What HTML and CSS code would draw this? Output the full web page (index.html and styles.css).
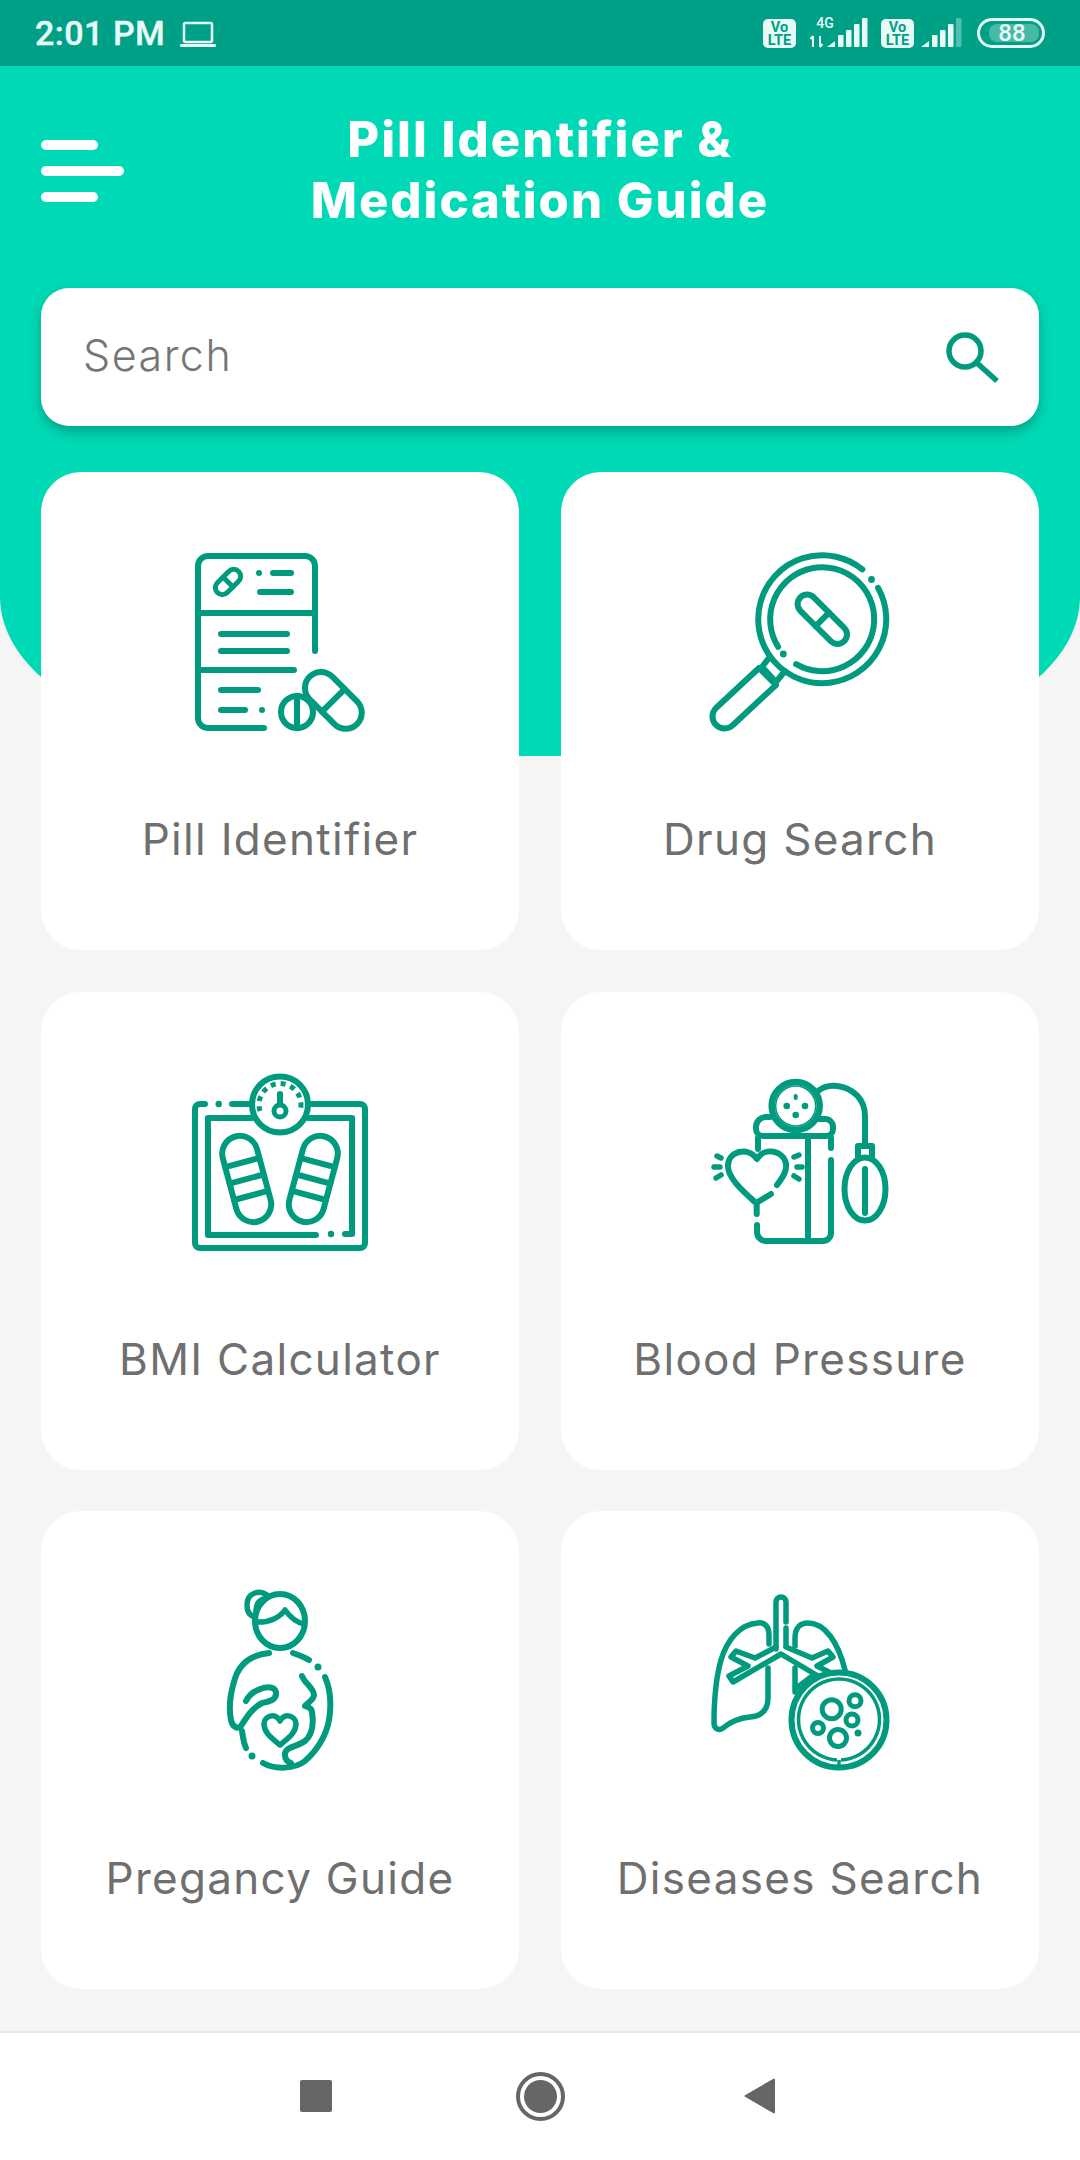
FILE: index.html
```html
<!DOCTYPE html>
<html lang="en">
<head>
<meta charset="utf-8">
<title>Pill Identifier &amp; Medication Guide</title>
<link rel="stylesheet" href="styles.css">
</head>
<body>
<div class="phone">
  <div class="status">
    <div class="status-left">
      <span class="time">2:01 PM</span>
      <svg class="laptop" width="36" height="26" viewBox="0 0 36 26"><rect x="4" y="2" width="28" height="19" rx="1.5" class="laptop-screen"/><rect x="0" y="23" width="36" height="3" rx="1" class="sb-fill"/></svg>
    </div>
    <svg class="status-right" width="282" height="36" viewBox="763 15 282 36">
      <rect x="763" y="19" width="33" height="29" rx="5" class="sb-fill"/>
      <text x="779.5" y="32" class="badge-text">Vo</text><text x="779.5" y="45" class="badge-text">LTE</text>
      <text x="825" y="28" class="net-text">4G</text>
      <path d="M813 36v11M813 36l-2.500 3M820 47v-11M820 47l2.500-3" class="arrows"/>
      <path d="M827 47l8-6v6z" class="sb-fill"/>
      <rect x="838" y="35" width="5.500" height="12" rx="1" class="sb-fill"/><rect x="846" y="30" width="5.500" height="17" rx="1" class="sb-fill"/><rect x="854" y="24" width="5.500" height="23" rx="1" class="sb-fill"/><rect x="862" y="18" width="5.500" height="29" rx="1" class="sb-fill"/>
      <rect x="881" y="19" width="33" height="29" rx="5" class="sb-fill"/>
      <text x="897.500" y="32" class="badge-text">Vo</text><text x="897.500" y="45" class="badge-text">LTE</text>
      <path d="M921 47l8-6v6z" class="sb-fill"/>
      <rect x="932" y="35" width="5.500" height="12" rx="1" class="sb-fill"/><rect x="940" y="30" width="5.500" height="17" rx="1" class="sb-fill"/><rect x="948" y="24" width="5.500" height="23" rx="1" class="sb-fill"/><rect x="956" y="18" width="5.500" height="29" rx="1" class="sb-faded"/>
      <rect x="978.500" y="19.500" width="65" height="27" rx="13.500" class="bat-border"/>
      <rect x="989" y="24" width="50" height="18" rx="8" class="bat-level"/>
      <text x="1012" y="41" class="bat-text">88</text>
    </svg>
  </div>

  <main class="main">
    <header class="header">
      <div class="topbar">
        <div class="burger"><span class="bar"></span><span class="bar long"></span><span class="bar"></span></div>
        <h1 class="title">Pill Identifier &amp;<br>Medication Guide</h1>
      </div>
      <div class="search">
        <span class="search-text">Search</span>
        <svg class="search-icon" width="56" height="52" viewBox="0 0 56 52"><circle cx="21" cy="19" r="16"/><path d="M33 31L53 49"/></svg>
      </div>
    </header>

    <section class="grid">
      <a class="card">
        <svg class="icon" width="220" height="220" viewBox="0 0 220 220">
          <path d="M145 121V36a10 10 0 0 0-10-10H38a10 10 0 0 0-10 10V188a10 10 0 0 0 10 10H94M28 83H145M28 140H124M51 104H117M51 121H117M51 160H88M51 180H75M103 43H121M90 62H121"/>
          <circle cx="89" cy="43" r="3" class="dot"/><circle cx="92" cy="180" r="3" class="dot"/>
          <g transform="rotate(-45 58 52)"><rect x="43" y="45" width="30" height="14" rx="7" stroke-width="5"/><path d="M58 45V59" stroke-width="5"/></g>
          <circle cx="127" cy="182" r="16"/><path d="M127 166V198"/>
          <g transform="rotate(45 163 170)"><rect x="130" y="154" width="67" height="32" rx="16" class="white"/><path d="M163.500 154V186"/></g>
        </svg>
        <span class="label">Pill Identifier</span>
      </a>
      <a class="card">
        <svg class="icon" width="220" height="220" viewBox="0 0 220 220">
          <path d="M172.300 39.300A64 64 0 1 0 188 57.800" stroke-width="6"/>
          <path d="M88.100 116.800A52 52 0 1 1 106.100 134.200" stroke-width="6"/>
          <circle cx="181.500" cy="49.500" r="3.400" class="dot"/><circle cx="93.300" cy="124" r="3.400" class="dot"/>
          <path d="M69 138L26 178a12 12 0 0 0 17 17L86 155ZM79 128L72 137M95 141L86 152M73 138L85 151" stroke-width="6"/>
          <g transform="rotate(45 132.300 89.300)"><rect x="101.300" y="79.800" width="62" height="19" rx="9.500" stroke-width="6"/><path d="M132.300 79.800V98.800" stroke-width="6"/></g>
        </svg>
        <span class="label">Drug Search</span>
      </a>
      <a class="card">
        <svg class="icon" width="220" height="220" viewBox="0 -1 220 220">
          <path d="M35 53H30a5 5 0 0 0-5 5V192a5 5 0 0 0 5 5H190a5 5 0 0 0 5-5V58a5 5 0 0 0-5-5H140M62 53H80M82 67H38V184H146M175 183H182V67H138"/>
          <circle cx="48.700" cy="53" r="3.200" class="dot"/><circle cx="161" cy="183" r="3.200" class="dot"/>
          <circle cx="110" cy="53.500" r="28"/>
          <path d="M90 60A21 21 0 1 1 130 60" stroke-dasharray="5 5" stroke-linecap="butt" stroke-width="5"/>
          <path d="M110 43V53"/><circle cx="110" cy="60" r="6" stroke-width="5"/>
          <g transform="rotate(-15 76.700 128)"><rect x="59" y="84" width="35.400" height="88" rx="17.700"/><path d="M59 111H94M59 128H94M59 145H94"/></g>
          <g transform="rotate(15 143.300 128)"><rect x="125.600" y="84" width="35.400" height="88" rx="17.700"/><path d="M126 111H161M126 128H161M126 145H161"/></g>
        </svg>
        <span class="label">BMI Calculator</span>
      </a>
      <a class="card">
        <svg class="icon" width="220" height="220" viewBox="0 -11 220 220">
          <path d="M80 56H76a10 10 0 0 0-10 10v2a7 7 0 0 0 7 7H136a7 7 0 0 0 7-7v-2a8 8 0 0 0-8-8h-6" stroke-width="6"/>
          <path d="M68 77V88M141 77V87M141 99V172a8 8 0 0 1-8 8H76a9 9 0 0 1-9-9V164M118 77V180" stroke-width="6"/>
          <circle cx="105.700" cy="45" r="24" class="white" stroke-width="6.500"/>
          <circle cx="105.700" cy="45" r="20" stroke-width="1.500"/>
          <path d="M105.700 35V37" stroke-width="4"/>
          <circle cx="96.700" cy="45" r="3.300" class="dot"/><circle cx="115" cy="45" r="3.300" class="dot"/><circle cx="105.700" cy="54" r="3.300" class="dot"/>
          <path d="M128 30C134 25 140 24 147 25C163 27 175 38 175 55V84M168 98V85H182V98M175 108V152" stroke-width="6"/>
          <ellipse cx="175" cy="128" rx="20.500" ry="31.500" stroke-width="6"/>
          <path d="M87 124C93 116 97 110 96 103C94 90 75 85 67 98C58 85 38 90 38 105C38 118 55 132 66 142L81 133M66.700 143V153" stroke-width="6" class="white"/>
          <path d="M27 95L31 97M24 106H30M26 117L31 114M104 96L109 94M107 106H112M104 115L109 118" stroke-width="5.500"/>
        </svg>
        <span class="label">Blood Pressure</span>
      </a>
      <a class="card">
        <svg class="icon" width="220" height="220" viewBox="-20 -1 220 220">
          <ellipse cx="90" cy="51" rx="25" ry="27" stroke-width="6"/>
          <path d="M66 52C80 53 90 47 95 40C100 47 105 52 114 54M77 25C70 20 57 22 57 35C57 42 60 46 65 47M66 40C66 35 69 31 73 29" stroke-width="5.500"/>
          <path d="M79 83C60 85 48 95 44 112C40 125 39 140 41 150C42 156 47 160 51 156C56 148 62 138 72 133C80 131 87 130 86 122C84 115 74 117 68 120C63 122 58 127 56 131" stroke-width="6"/>
          <path d="M103 83C109 85 114 87 119 90M135 107C140 118 141 130 140 142C139 160 130 178 115 191C105 199 85 200 73 193M112 106C115 114 124 118 124 125C124 130 117 133 115 136C118 137 122 138 122 142C124 155 122 165 115 171C107 177 94 177 95 185C95 190 98 192 101 193M52 161C53 168 54 174 56 178" stroke-width="6"/>
          <circle cx="128" cy="97" r="3.500" class="dot"/><circle cx="62" cy="186" r="3.500" class="dot"/>
          <path d="M90 175C80 167 74 162 74 154C74 146 85 142 90 151C95 142 106 146 106 154C106 162 100 167 90 175Z" stroke-width="5.500"/>
        </svg>
        <span class="label">Pregancy Guide</span>
      </a>
      <a class="card">
        <svg class="icon" width="220" height="220" viewBox="0 -1 220 220">
          <path d="M86 79V32a5 5 0 0 1 10 0V52M96 58V76" stroke-width="5.500"/>
          <path d="M86 77L65 88L46 81L41 87L58 96L39 106L43 112L91 84L128 106M96 77L122 88L138 81L143 87L127 96L143 104" stroke-width="5.500"/>
          <path d="M79 74V65C79 56 74 52 68 53C50 54 37 70 31 90C26 108 24 135 24 153C24 159 29 161 33 158C40 152 50 148 60 147C72 146 78 140 78 128V98" stroke-width="5.500"/>
          <path d="M105 76V68C105 58 110 53 118 53C135 53 148 72 155 100M105 98V122M108 117L121 107" stroke-width="5.500"/>
          <circle cx="149" cy="150" r="47.500" class="white"/>
          <path d="M147 190A40.500 40.500 0 1 1 151 190M149 190V197" stroke-width="3.500" stroke-linecap="butt"/>
          <circle cx="141.700" cy="139.300" r="9.500" stroke-width="5"/><circle cx="165" cy="130.700" r="6" stroke-width="5"/><circle cx="162" cy="150" r="6" stroke-width="5"/><circle cx="128" cy="158" r="5.500" stroke-width="5"/><circle cx="148" cy="168" r="8.500" stroke-width="5"/>
          <circle cx="168" cy="163" r="3.500" class="dot"/>
        </svg>
        <span class="label">Diseases Search</span>
      </a>
    </section>
  </main>

  <nav class="navbar">
    <span class="nav-square"></span>
    <span class="nav-home"><span class="nav-home-dot"></span></span>
    <svg class="nav-back" width="32" height="36" viewBox="0 0 32 36"><path d="M30 1.500V34.500L1.500 18Z"/></svg>
  </nav>
</div>
</body>
</html>
```

FILE: styles.css
```css
* { box-sizing: border-box; }
html, body { margin: 0; padding: 0; }
body { background: #f5f5f5; font-family: "Inter", "Open Sans", sans-serif; }

.phone { width: 1080px; height: 2160px; display: flex; flex-direction: column; overflow: hidden; }

.status { height: 66px; flex: none; background: #00a086; color: #e8faf6; display: flex; align-items: center; justify-content: space-between; padding: 0 35px; }
.status-left { display: flex; align-items: center; gap: 15px; }
.time { font: 500 34px/36px "Roboto", sans-serif; letter-spacing: .5px; -webkit-text-stroke: .4px #e8faf6; }
.laptop { margin-top: 2px; }
.laptop-screen { fill: none; stroke: #e8faf6; stroke-width: 2.500; }
.sb-fill { fill: #e8faf6; }
.sb-faded { fill: #e8faf6; opacity: .35; }
.badge-text { font: 700 14.500px "Roboto", sans-serif; fill: #00a086; text-anchor: middle; }
.net-text { font: 500 14px "Roboto", sans-serif; fill: #e8faf6; text-anchor: middle; }
.arrows { fill: none; stroke: #e8faf6; stroke-width: 2; }
.bat-border { fill: none; stroke: #e8faf6; stroke-width: 3; }
.bat-level { fill: #e8faf6; opacity: .3; }
.bat-text { font: 500 24px "Roboto", sans-serif; fill: #e8faf6; text-anchor: middle; }

.main { flex: 1; }
.header { height: 690px; background: #00d9b5; border-radius: 0 0 300px 300px / 0 0 159px 159px; padding: 43px 41px 0; }
.topbar { display: grid; grid-template-columns: 83px 1fr 83px; align-items: center; }
.burger { display: flex; flex-direction: column; gap: 16px; align-items: flex-start; margin-top: 2px; }
.bar { width: 57px; height: 10px; border-radius: 5px; background: #fff; }
.bar.long { width: 83px; }
.title { margin: 0; color: #fff; text-align: center; font-size: 49px; line-height: 61px; font-weight: 800; letter-spacing: 2px; white-space: nowrap; }

.search { height: 138px; margin-top: 57px; background: #fff; border-radius: 28px; box-shadow: 0 6px 12px rgba(0, 90, 75, .4); display: flex; align-items: center; justify-content: space-between; padding: 0 39px 4px 42px; }
.search-text { color: #757575; font-size: 43px; font-weight: 300; letter-spacing: 1.500px; }
.search-icon { fill: none; stroke: #009a7e; stroke-width: 5.500; margin-top: 6px; }

.grid { margin: -284px 41px 0; position: relative; display: grid; grid-template-columns: repeat(2, 478px); grid-auto-rows: 478px; column-gap: 42px; row-gap: 41.500px; }
.card { background: #fff; border-radius: 40px; padding-top: 58px; display: flex; flex-direction: column; align-items: center; }
.icon { flex: none; display: block; fill: none; stroke: #009a7e; stroke-width: 6; stroke-linecap: round; stroke-linejoin: round; }
.icon .dot { fill: #009a7e; stroke: none; }
.icon .white { fill: #fff; }
.label { margin-top: 64px; color: #6f6f6f; font-size: 44px; line-height: 50px; font-weight: 400; letter-spacing: 1.300px; }

.navbar { height: 129px; flex: none; background: #fff; border-top: 2px solid #e6e6e6; display: flex; align-items: center; justify-content: center; gap: 184px; padding: 0 5px 1px 0; }
.nav-square { width: 32px; height: 32px; border-radius: 2px; background: #666; }
.nav-home { width: 49px; height: 49px; border-radius: 50%; border: 4px solid #666; display: flex; align-items: center; justify-content: center; }
.nav-home-dot { width: 33px; height: 33px; border-radius: 50%; background: #666; }
.nav-back { margin-left: -5px; fill: #666; stroke: #666; stroke-width: 2; stroke-linejoin: round; }
```
